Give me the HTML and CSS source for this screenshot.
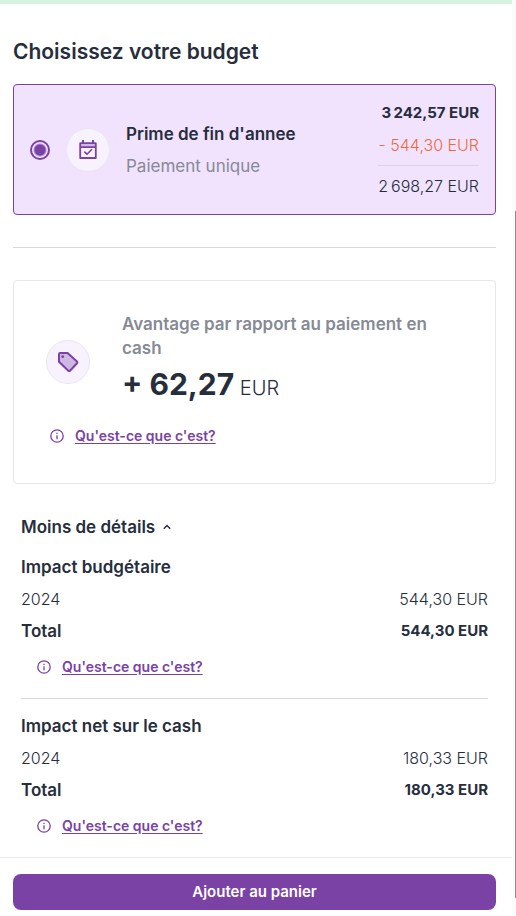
FILE: index.html
```html
<!DOCTYPE html>
<html lang="fr">
<head>
<meta charset="utf-8">
<meta name="viewport" content="width=device-width, initial-scale=1">
<title>Choisissez votre budget</title>
<link rel="stylesheet" href="styles.css">
</head>
<body>
<svg class="sprite">
  <symbol id="info" viewBox="0 0 14 14">
    <circle cx="7" cy="7" r="6.2" fill="none" stroke="currentColor" stroke-width="1.3"/>
    <path d="M7 6.2V10.2M7 3.7V5" stroke="currentColor" stroke-width="1.3"/>
  </symbol>
</svg>
<div class="page">
  <div class="banner"></div>
  <main class="content">
    <h1 class="title">Choisissez votre budget</h1>

    <label class="budget" for="prime">
      <input class="radio" type="radio" id="prime" name="budget" checked>
      <span class="badge">
        <svg width="24" height="24" viewBox="0 0 24 24" fill="none">
          <path d="M4 5h16v4H4z" fill="#cdb8e2"/>
          <path d="M4.2 5.2h15.6V20H4.2zM4 9.2h16" stroke="#7a42a5" stroke-width="1.8" stroke-linejoin="round"/>
          <path d="M7 2v3M17 2v3" stroke="#7a42a5" stroke-width="2"/>
          <path d="M8.3 13.6l2.7 2.6 4.9-5" stroke="#7a42a5" stroke-width="1.6"/>
        </svg>
      </span>
      <span class="budget-text">
        <strong>Prime de fin d'annee</strong>
        <span class="muted">Paiement unique</span>
      </span>
      <span class="amounts">
        <strong>3&#8239;242,57 EUR</strong>
        <span class="minus">- 544,30 EUR</span>
        <span class="rest">2&#8239;698,27 EUR</span>
      </span>
    </label>

    <hr class="rule">

    <section class="benefit">
      <div class="benefit-main">
        <span class="badge">
          <svg width="24" height="24" viewBox="0 0 24 24" fill="none">
            <path d="M3 4.2Q3 3 4.2 3H11.6L21 11.4Q21.9 12.3 21 13.2L14 20.8Q13.2 21.6 12.3 20.8L3 11.8Z" fill="#cdb8e2" stroke="#7a42a5" stroke-width="2" stroke-linejoin="round"/>
            <circle cx="6.7" cy="6.7" r="1.4" fill="#7a42a5"/>
          </svg>
        </span>
        <div>
          <h2 class="benefit-title">Avantage par rapport au paiement en cash</h2>
          <p class="price"><strong>+ 62,27</strong> EUR</p>
        </div>
      </div>
      <div class="help">
        <svg class="info"><use href="#info"/></svg>
        <a href="#">Qu'est-ce que c'est?</a>
      </div>
    </section>

    <section class="details">
      <button class="toggle" type="button">Moins de détails
        <svg width="8" height="6" viewBox="0 0 8 6" fill="none"><path d="M.8 4.8L4 1.6l3.2 3.2" stroke="currentColor" stroke-width="1.4"/></svg>
      </button>
      <div class="impact">
        <table>
          <caption>Impact budgétaire</caption>
          <tbody>
            <tr><th scope="row">2024</th><td>544,30 EUR</td></tr>
            <tr class="total"><th scope="row">Total</th><td>544,30 EUR</td></tr>
          </tbody>
        </table>
        <div class="help">
          <svg class="info"><use href="#info"/></svg>
          <a href="#">Qu'est-ce que c'est?</a>
        </div>
      </div>
      <div class="impact">
        <table>
          <caption>Impact net sur le cash</caption>
          <tbody>
            <tr><th scope="row">2024</th><td>180,33 EUR</td></tr>
            <tr class="total"><th scope="row">Total</th><td>180,33 EUR</td></tr>
          </tbody>
        </table>
        <div class="help">
          <svg class="info"><use href="#info"/></svg>
          <a href="#">Qu'est-ce que c'est?</a>
        </div>
      </div>
    </section>
  </main>
  <footer class="footer">
    <button class="add" type="button">Ajouter au panier</button>
  </footer>
</div>
<div class="track"><div class="thumb"></div></div>
</body>
</html>
```
FILE: styles.css
```css
* { box-sizing: border-box; }

body {
  margin: 0;
  min-height: 100vh;
  display: grid;
  grid-template-columns: minmax(0, 1fr) 4px;
  font-family: Inter, "Open Sans", sans-serif;
  font-size: 17px;
  line-height: 24px;
  color: #262d3d;
  background: #fff;
}

h1, h2, p { margin: 0; }
strong { font-weight: 600; }
button { font: inherit; border: 0; cursor: pointer; }
.sprite { display: none; }

.banner { height: 4px; background: #d6f3e1; }
.content { padding: 32px 16px 0 13px; }

.title {
  font-size: 21px;
  line-height: 32px;
  font-weight: 600;
  margin-bottom: 16px;
}

.budget {
  display: flex;
  align-items: center;
  gap: 16px;
  padding: 16px;
  border: 1px solid #7a42a5;
  border-radius: 4px;
  background: #f1e3fd;
}

.radio {
  appearance: none;
  flex: none;
  width: 20px;
  height: 20px;
  margin: 0;
  border: 2px solid #7a42a5;
  border-radius: 50%;
  background: radial-gradient(circle, #7a42a5 5px, transparent 7px);
}

.badge {
  flex: none;
  display: grid;
  place-items: center;
  width: 44px;
  height: 44px;
  border: 1px solid #ebe6ef;
  border-radius: 50%;
  background: #f8f2fe;
}

.budget-text, .amounts { display: flex; flex-direction: column; gap: 8px; }
.budget-text { flex: 1; }
.amounts { text-align: right; white-space: nowrap; font-size: 16px; font-weight: 300; }
.amounts strong { font-size: 15px; font-weight: 700; }
.muted { color: #858a96; }
.minus { color: #ee6a3c; }
.rest { border-top: 1px solid #d8d5de; padding-top: 8px; }

.rule { width: 100%; margin: 32px 0; border: 0; border-top: 1px solid #d9d9d9; }

.benefit {
  padding: 31px 32px;
  border: 1px solid #e8e8e8;
  border-radius: 4px;
}
.benefit-main { display: flex; align-items: center; gap: 32px; }
.benefit-title { font-size: 17px; line-height: 24px; font-weight: 600; color: #858a96; }
.price { font-size: 20px; line-height: 48px; font-weight: 300; }
.price strong { font-size: 30px; font-weight: 700; }

.help {
  display: flex;
  align-items: center;
  gap: 11px;
  margin-top: 12px;
  padding-left: 16px;
  font-size: 14px;
  font-weight: 600;
  color: #7a42a5;
}
.benefit .help { padding: 0 0 4px 4px; }
.help a { color: inherit; text-underline-offset: 2px; }
.info { width: 14px; height: 14px; }

.details { padding: 31px 8px 0; }
.toggle {
  display: flex;
  align-items: center;
  gap: 8px;
  margin-bottom: 16px;
  padding: 0;
  background: none;
  color: inherit;
  font-weight: 600;
}

.impact { padding-bottom: 19px; }
.impact + .impact { border-top: 1px solid #d9d9d9; padding-top: 15px; }

table { width: 100%; border-collapse: collapse; }
caption { text-align: left; font-weight: 600; }
th, td { padding: 8px 0 0; font-size: 16px; font-weight: 300; text-align: left; }
td { text-align: right; }
.total th { font-size: 17px; font-weight: 600; }
.total td { font-size: 15px; font-weight: 700; }

.footer { padding: 16px 16px 6px 13px; border-top: 1px solid #e8e8e8; }
.add {
  width: 100%;
  height: 36px;
  border-radius: 8px;
  background: #7a42a5;
  color: #fff;
  font-size: 15px;
  font-weight: 600;
}

.track { background: #fbfbfb; padding-left: 3px; display: grid; grid-template-rows: 23% 75% 2%; }
.thumb { grid-row: 2; background: #8b8b8b; }
```
